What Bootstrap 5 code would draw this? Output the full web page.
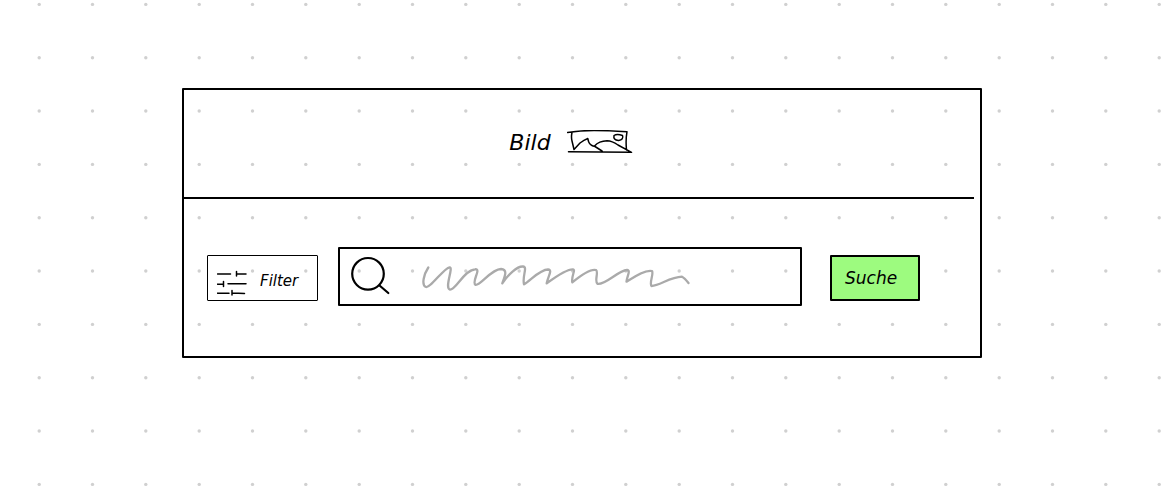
<!DOCTYPE html>
<html lang="de">
<head>
<meta charset="utf-8">
<meta name="viewport" content="width=device-width, initial-scale=1">
<title>Suche</title>
<link href="https://cdn.jsdelivr.net/npm/bootstrap@5.3.0/dist/css/bootstrap.min.css" rel="stylesheet">
<style>
  body {
    font-family: "DejaVu Sans", sans-serif;
    color: #000;
    /* dotted sheet: three dots per 160px tile in each direction */
    background: #fff url("data:image/svg+xml,%3Csvg xmlns='http://www.w3.org/2000/svg' width='160' height='160'%3E%3Cg fill='%23d0d0d0'%3E%3Ccircle cx='39.2' cy='4.4' r='1.7'/%3E%3Ccircle cx='92.5' cy='4.4' r='1.7'/%3E%3Ccircle cx='145.8' cy='4.4' r='1.7'/%3E%3Ccircle cx='39.2' cy='57.7' r='1.7'/%3E%3Ccircle cx='92.5' cy='57.7' r='1.7'/%3E%3Ccircle cx='145.8' cy='57.7' r='1.7'/%3E%3Ccircle cx='39.2' cy='111' r='1.7'/%3E%3Ccircle cx='92.5' cy='111' r='1.7'/%3E%3Ccircle cx='145.8' cy='111' r='1.7'/%3E%3C/g%3E%3C/svg%3E");
  }
  .sheet { padding: 88px 191px 88px 182px; }
  .ink { border: 2px solid #000; border-radius: 1px; }
  .banner { padding: 40px 22px 41px 0; font-size: 22px; line-height: 26px; }
  .divider { height: 2px; margin-right: 6px; background: #000; }
  .searchbar { padding: 48px 60px 50px 23px; }
  .sketch-btn { --bs-btn-color: #000; --bs-btn-hover-color: #000; --bs-btn-border-radius: 1px; --bs-btn-border-color: #000; --bs-btn-hover-border-color: #000; font-style: italic; line-height: 24px; height: 46px; margin-top: 2px; }
  .filter-btn { --bs-btn-font-size: 15px; padding: 8px 9px 2px; gap: 13px; width: 111px; margin-right: 20px; border-width: 1px; }
  .search-btn { --bs-btn-padding-x: 13px; --bs-btn-font-size: 17px; --bs-btn-bg: #9dfb7f; --bs-btn-hover-bg: #8bee6c; width: 90px; margin-left: 28px; border-width: 2px; }
  .search-box { height: 59px; padding: 0 12px 2px 10px; }
  .scribble { position: absolute; left: 0; top: 0; pointer-events: none; }
  .line { fill: none; stroke: #000; stroke-linecap: round; stroke-linejoin: round; }
  .pencil { stroke: #aaa; }
</style>
</head>
<body>
<main class="sheet">
  <section class="ink">
    <div class="banner d-flex justify-content-center align-items-center">
      <span class="fst-italic me-3">Bild</span>
      <svg class="line" width="66" height="26" viewBox="567 130 66 26" stroke-width="1.500" role="img" aria-label="Bild">
        <path d="M567.500 132.500Q580 130.500 594 130.500T627 131.700Q625.500 140 626.500 150M572 132.500Q571 137 572 141Q573 145 574 149.500L580 143Q584 140 587.800 138.500Q588.500 143 590.500 144.500Q592 146 595 146.500L602 151M594.500 146Q599 141 607 140.800Q612 141 618 145L631.500 152.300M568.500 151.800L631 152.300"/>
        <path d="M614 135.500Q617 133.500 622.500 135.500Q624 139.500 618.500 140.500Q613 140 614 135.500Z"/>
      </svg>
    </div>
    <div class="divider"></div>
    <form class="searchbar d-flex align-items-center" onsubmit="return false">
      <button type="button" class="btn sketch-btn filter-btn d-flex align-items-center flex-shrink-0">
        <svg class="line flex-shrink-0" width="30" height="30" viewBox="217 266 30 30" stroke-width="1.500" aria-hidden="true">
          <path d="M217.500 274H230.500M236.500 271.500V276M237 274H246M217.500 284.200H223M223.500 281.500V286.500M228 283.700H246M217.500 293.200H229M232 290.500V295M232.500 293L244.500 293.400"/>
        </svg>
        Filter
      </button>
      <div class="search-box ink d-flex align-items-center flex-grow-1">
        <svg class="line flex-shrink-0" width="40" height="40" viewBox="350 256 40 40" stroke-width="2.200" aria-hidden="true">
          <circle cx="368" cy="273.800" r="15.800"/>
          <path d="M379.500 285.500L388.300 293"/>
        </svg>
        <div class="position-relative flex-grow-1 ms-4">
          <svg class="scribble line pencil" width="280" height="38" viewBox="414 258 280 38" stroke-width="2.300" aria-hidden="true">
            <path d="M428.300 267.500C424 274 421 285 426 287C430 288.500 444 268 449.500 267.300C454 267 444 288 450 289.600C456 290 464 270 475 269.300C482 268.500 471 282 475.500 284.800C480 286.500 491 269 501 269C508 269.500 505 276 502.300 283.300C508 275 517 266 523 266.500C528 267 522 276 524 284.300C531 280 540 269.500 548 269.500C553 270 548 276 546.700 283.300C554 278 566 269 573 269.300C576 270 571 276 572.300 282.300C580 276 591 268.500 596 270C599 272 594 281 597.500 283.800C605 285.500 618 270.500 627 270C631 270.500 627 276 626.500 281.700C634 277 645 269.500 652 271C654 274 649 283 651.500 286C660 285.500 670 277 682 276.700Q684.500 278 688.500 283"/>
          </svg>
          <input type="search" class="form-control border-0 bg-transparent shadow-none" aria-label="Suchbegriff">
        </div>
      </div>
      <button type="submit" class="btn sketch-btn search-btn text-start flex-shrink-0">Suche</button>
    </form>
  </section>
</main>
<script src="https://cdn.jsdelivr.net/npm/bootstrap@5.3.0/dist/js/bootstrap.bundle.min.js"></script>
</body>
</html>
